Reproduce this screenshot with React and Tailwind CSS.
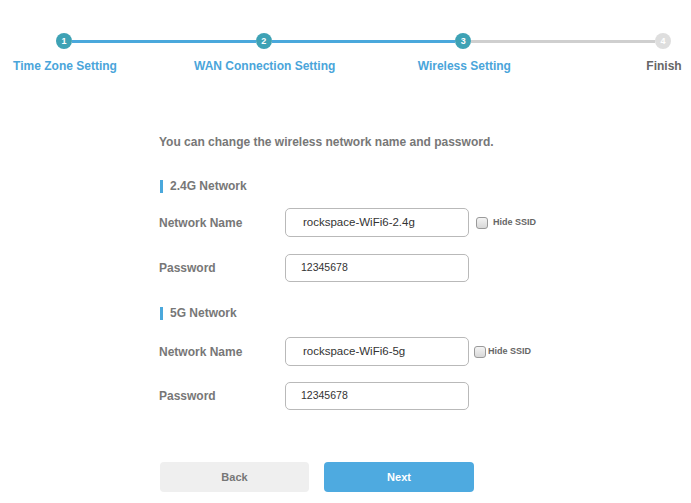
import React from "react";

const steps = [
  { n: 1, label: "Time Zone Setting", done: true },
  { n: 2, label: "WAN Connection Setting", done: true },
  { n: 3, label: "Wireless Setting", done: true },
  { n: 4, label: "Finish", done: false },
];

const Stepper = () => (
  <div>
    <div className="flex items-center pl-[56px] pr-[20px]">
      {steps.map((s, i) => (
        <React.Fragment key={s.n}>
          {i > 0 && (
            <div
              className={
                s.done
                  ? "h-[3px] flex-1 bg-[#4aa8dc]"
                  : "h-[3px] flex-1 bg-[#cfcfcf]"
              }
            />
          )}
          <div
            className={
              s.done
                ? "flex h-4 w-4 items-center justify-center rounded-full bg-[#3ea2b5] text-[9px] font-bold leading-none text-white"
                : "flex h-4 w-4 items-center justify-center rounded-full bg-[#dedede] text-[9px] font-bold leading-none text-white"
            }
          >
            {s.n}
          </div>
        </React.Fragment>
      ))}
    </div>
    <div className="mt-[10px] flex justify-between pl-[57px] pr-[19px]">
      {steps.map((s) => (
        <div key={s.n} className="flex w-4 justify-center">
          <span
            className={
              s.done
                ? "whitespace-nowrap text-[12px] font-bold leading-[14px] text-[#4aa5da]"
                : "whitespace-nowrap text-[12px] font-bold leading-[14px] text-[#666]"
            }
          >
            {s.label}
          </span>
        </div>
      ))}
    </div>
  </div>
);

const SectionTitle = ({ children, className }) => (
  <div className={"flex items-center " + className}>
    <div className="ml-px h-[13px] w-[3px] bg-[#4aa8dc]" />
    <span className="ml-[7px] text-[12px] font-bold leading-[14px] text-[#777]">
      {children}
    </span>
  </div>
);

const Row = ({ label, value, tall, hide, tight, className }) => (
  <div className={"flex items-center " + className}>
    <div className="w-[126px] text-[12px] font-bold text-[#777]">{label}</div>
    <div
      className={
        (tall ? "h-[29px] pl-[17px] text-[11.5px] text-[#333]" : "h-[28px] pl-[15px] text-[10.5px] text-[#333]") +
        " flex w-[184px] items-center rounded-[5px] border border-[#b9b9b9] bg-white"
      }
    >
      {value}
    </div>
    {hide && (
      <div className={tight ? "ml-[5px] flex items-center" : "ml-[7px] flex items-center"}>
        <div className="h-[12px] w-[12px] rounded-[3px] border border-[#9a9a9a] bg-gradient-to-b from-[#f4f4f4] to-[#d8d8d8]" />
        <span
          className={
            (tight ? "ml-[2px]" : "ml-[5px]") +
            " text-[9px] font-bold text-[#666]"
          }
        >
          Hide SSID
        </span>
      </div>
    )}
  </div>
);

export default function App() {
  return (
    <div
      className="h-[503px] w-[691px] overflow-hidden bg-white pt-[33px]"
      style={{ fontFamily: '"Liberation Sans", Arial, sans-serif' }}
    >
      <Stepper />
      <div className="ml-[159px] mt-[61px]">
        <p className="text-[12px] font-bold leading-4 text-[#777]">
          You can change the wireless network name and password.
        </p>
        <SectionTitle className="mt-[29px]">2.4G Network</SectionTitle>
        <Row
          className="mt-[15px]"
          label="Network Name"
          value="rockspace-WiFi6-2.4g"
          tall
          hide
        />
        <Row className="mt-[17px]" label="Password" value="12345678" />
        <SectionTitle className="mt-[24px]">5G Network</SectionTitle>
        <Row
          className="mt-[17px]"
          label="Network Name"
          value="rockspace-WiFi6-5g"
          tall
          hide
          tight
        />
        <Row className="mt-[16px]" label="Password" value="12345678" />
        <div className="ml-px mt-[52px] flex gap-[15px]">
          <button className="h-[30px] w-[149px] rounded-[4px] bg-[#efefef] text-[11px] font-bold text-[#777]">
            Back
          </button>
          <button className="h-[30px] w-[150px] rounded-[4px] bg-[#4eaae0] text-[11px] font-bold text-white">
            Next
          </button>
        </div>
      </div>
    </div>
  );
}
